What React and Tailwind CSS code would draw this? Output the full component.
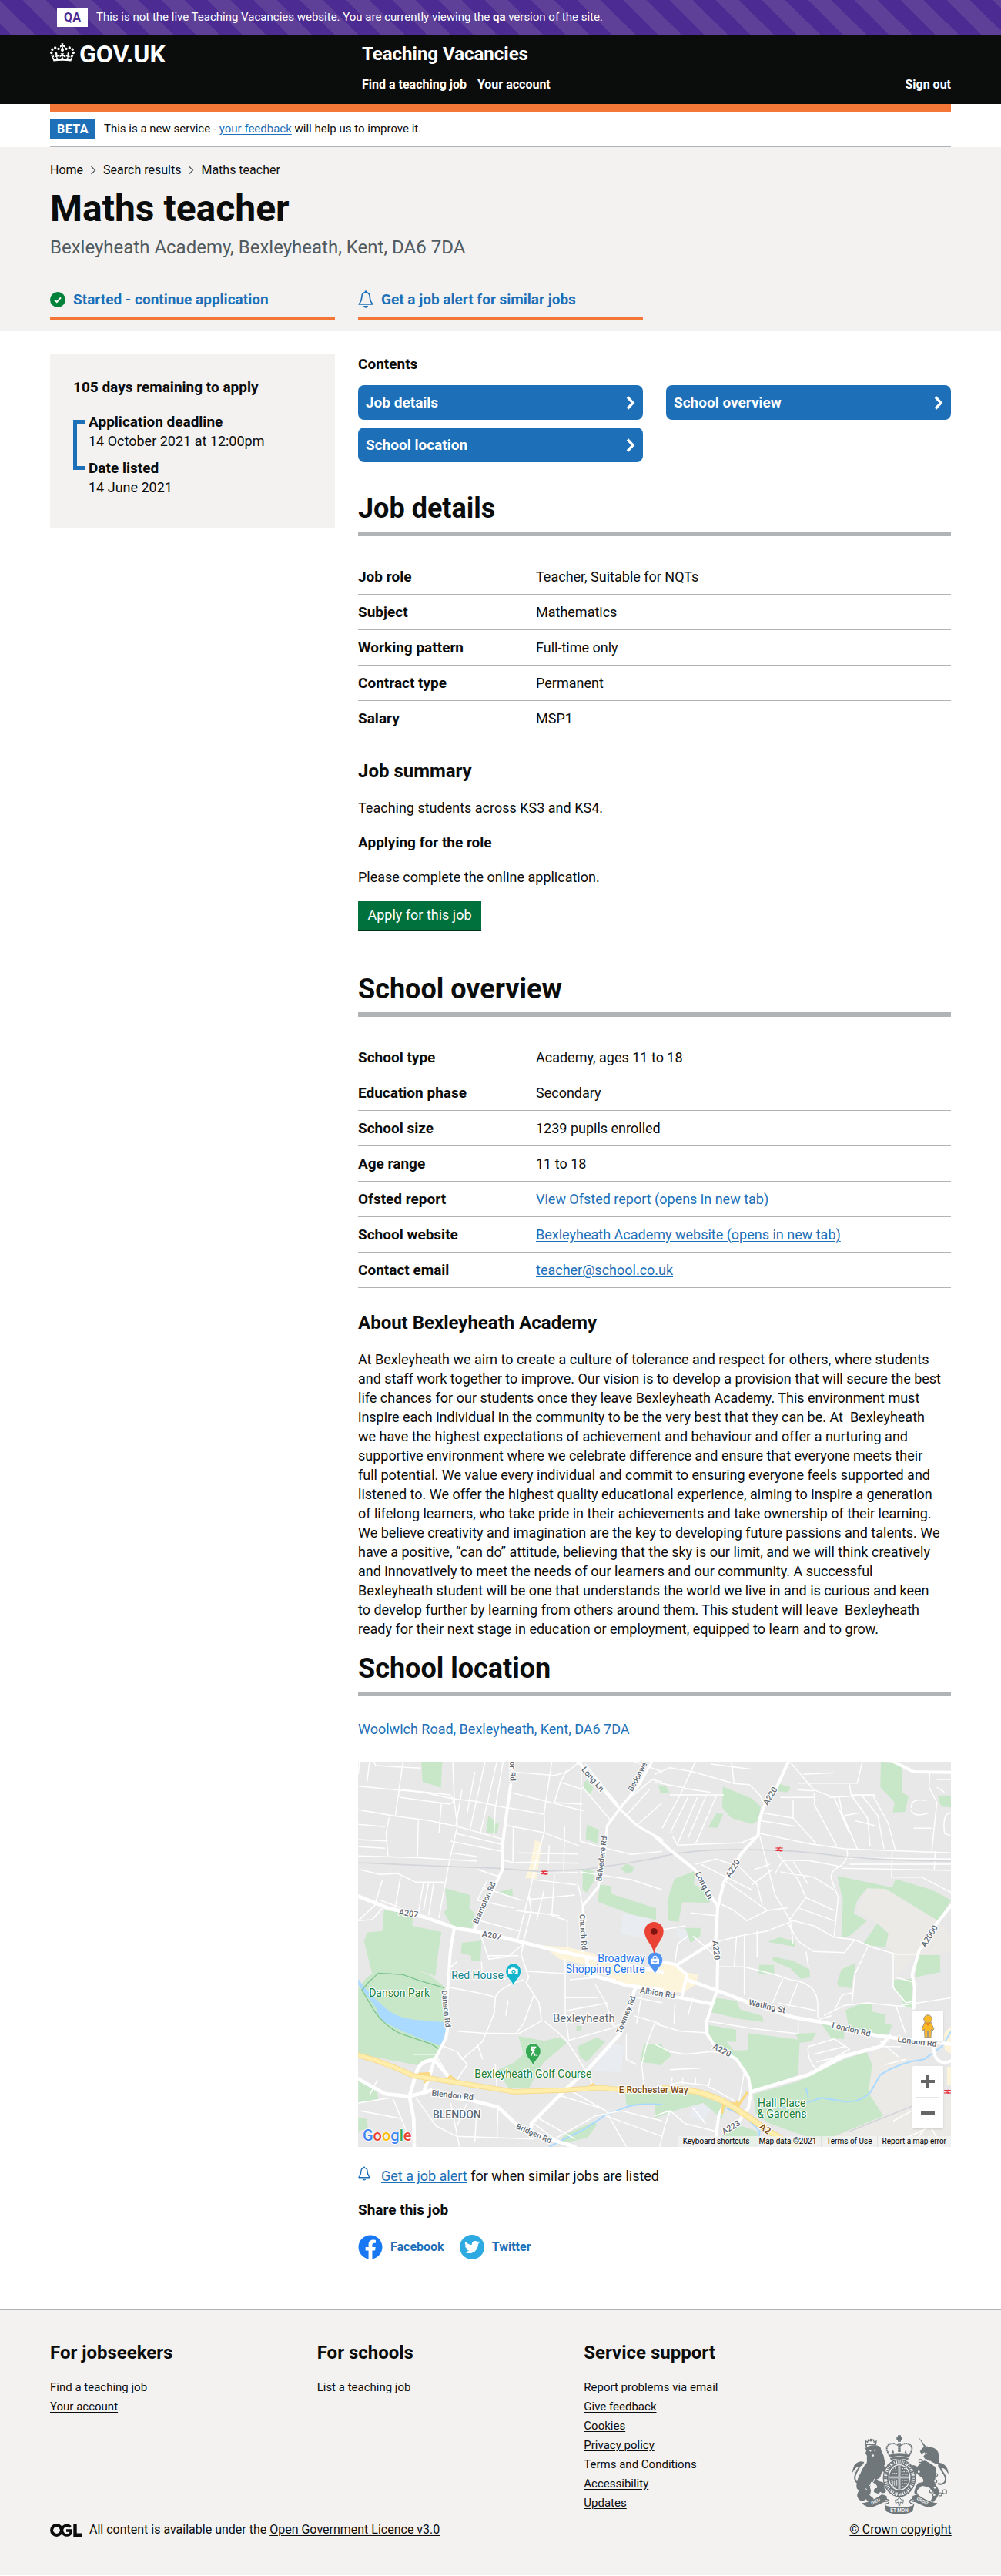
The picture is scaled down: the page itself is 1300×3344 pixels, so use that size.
import React from "react";
import { FaFacebook, FaTwitter } from "react-icons/fa";

const link = "text-[#1d70b8] underline underline-offset-2";
const footerLink = "text-[#0b0c0c] underline underline-offset-2";
const container = "mx-auto max-w-[1170px] w-[calc(100%-60px)]";

/* ---------- icons ---------- */

function CrownIcon({ className }) {
  return (
    <svg className={className} viewBox="0 0 132 97" fill="currentColor" aria-hidden="true">
      <path d="M25 30.2c3.5 1.5 7.7-.2 9.1-3.7 1.5-3.6-.2-7.8-3.9-9.2-3.6-1.4-7.6.3-9.1 3.9-1.4 3.5.3 7.5 3.9 9zM9 39.5c3.6 1.5 7.8-.2 9.2-3.7 1.5-3.6-.2-7.8-3.9-9.1-3.6-1.5-7.6.2-9.1 3.8-1.4 3.5.3 7.5 3.8 9zM4.4 57.2c3.5 1.5 7.7-.2 9.1-3.8 1.5-3.6-.2-7.7-3.9-9.1-3.5-1.5-7.6.3-9.1 3.8-1.4 3.5.3 7.6 3.9 9.1zm38.3-21.4c3.5 1.5 7.7-.2 9.1-3.8 1.5-3.6-.2-7.7-3.9-9.1-3.6-1.5-7.6.3-9.1 3.8-1.3 3.6.4 7.7 3.9 9.1zm64.4-5.6c-3.6 1.5-7.8-.2-9.1-3.7-1.5-3.6.2-7.8 3.8-9.2 3.6-1.4 7.7.3 9.2 3.9 1.3 3.5-.4 7.5-3.9 9zm15.9 9.3c-3.6 1.5-7.7-.2-9.1-3.7-1.5-3.6.2-7.8 3.7-9.1 3.6-1.5 7.7.2 9.2 3.8 1.5 3.5-.3 7.5-3.8 9zm4.7 17.7c-3.6 1.5-7.8-.2-9.2-3.8-1.5-3.6.2-7.7 3.9-9.1 3.6-1.5 7.7.3 9.2 3.8 1.3 3.5-.4 7.6-3.9 9.1zM89.3 35.8c-3.6 1.5-7.8-.2-9.2-3.8-1.4-3.6.2-7.7 3.9-9.1 3.6-1.5 7.7.3 9.2 3.8 1.4 3.6-.3 7.7-3.9 9.1zM69.7 17.7l8.9 4.7V9.3l-8.9 2.8c-.2-.3-.5-.6-.9-.9L72.4 0H59.6l3.5 11.2c-.3.3-.6.5-.9.9l-8.8-2.8v13.1l8.8-4.7c.3.3.6.7.9.9l-5 15.4v.1c-.2.8-.4 1.6-.4 2.4 0 4.1 3.1 7.5 7 8.1h.2c.3 0 .7.1 1 .1.4 0 .7 0 1-.1h.2c4-.6 7.1-4.1 7.1-8.1 0-.8-.1-1.7-.4-2.4V34l-5.1-15.4c.4-.2.7-.6 1-.9zM66 92.8c16.9 0 32.8 1.1 47.1 3.2 4-16.9 8.9-26.7 14-33.5l-9.6-3.4c1 4.9 1.1 7.2 0 10.2-1.5-1.4-3-4.3-4.2-8.7L108.6 76c2.8-2 5-3.2 7.5-3.3-4.4 9.4-10 11.9-13.6 11.2-4.3-.8-6.3-4.6-5.6-7.9 1-4.7 5.7-5.9 8-.5 4.3-8.7-3-11.4-7.6-8.8 7.1-7.2 7.9-13.5 2.1-21.1-8 6.1-8.1 12.3-4.5 20.8-4.7-5.4-12.1-2.5-9.5 6.2 3.4-5.2 7.9-2 7.2 3.1-.6 4.3-6.4 7.8-13.5 7.2-10.3-.9-10.9-8-11.2-13.8 2.5-.5 7.1 1.8 11 7.3L80.2 60c-4.1 4.4-8 5.3-12.3 5.4 1.4-4.4 8-11.6 8-11.6H55.5s6.4 7.2 7.9 11.6c-4.2-.1-8-1-12.3-5.4l1.4 16.4c3.9-5.5 8.5-7.7 10.9-7.3-.3 5.8-.9 12.8-11.1 13.8-7.2.6-12.9-2.9-13.5-7.2-.7-5 3.8-8.3 7.1-3.1 2.7-8.7-4.6-11.6-9.4-6.2 3.7-8.5 3.6-14.7-4.6-20.8-5.8 7.6-5 13.9 2.2 21.1-4.7-2.6-11.9.1-7.7 8.8 2.3-5.5 7.1-4.2 8.1.5.7 3.3-1.3 7.1-5.7 7.9-3.5.7-9-1.8-13.5-11.2 2.5.1 4.7 1.3 7.5 3.3l-4.7-15.4c-1.2 4.4-2.7 7.2-4.3 8.7-1.1-3-.9-5.3 0-10.2l-9.5 3.4c5 6.9 9.9 16.7 14 33.5 14.8-2.1 30.8-3.2 47.7-3.2z" />
    </svg>
  );
}

function BellIcon({ className }) {
  return (
    <svg className={className} viewBox="0 0 20 23" fill="none" aria-hidden="true">
      <path
        d="M10 2.6c-3.4 0-5.2 2.6-5.2 5.8 0 5.2-1.6 6.6-3.6 9.6h17.6c-2-3-3.6-4.4-3.6-9.6 0-3.2-1.8-5.8-5.2-5.8Z"
        stroke="#1d70b8"
        strokeWidth="1.7"
        strokeLinejoin="round"
      />
      <path d="M10 .3a1.4 1.4 0 0 1 1.4 1.4v1.2H8.6V1.7A1.4 1.4 0 0 1 10 .3ZM7 20h6c-.3 1.7-1.5 2.8-3 2.8S7.300 21.700 7 20Z" fill="#1d70b8" />
    </svg>
  );
}

function TickIcon() {
  return (
    <svg className="size-5 shrink-0" viewBox="0 0 20 20" aria-hidden="true">
      <circle cx="10" cy="10" r="10" fill="#00823b" />
      <path d="M5.800 10.300l3 2.700 5.200-5.700" fill="none" stroke="#fff" strokeWidth="2" />
    </svg>
  );
}

function OglIcon() {
  return (
    <svg className="w-[41px] h-[17px] shrink-0" viewBox="0 0 41 17" fill="none" stroke="#0b0c0c" aria-hidden="true">
      <circle cx="8.500" cy="8.500" r="6.400" strokeWidth="4" />
      <path d="M26.500 4.200A6.400 6.400 0 1 0 27 12.500V9H21" strokeWidth="3.600" />
      <path d="M32.500 0v14.800H41" strokeWidth="4.400" />
    </svg>
  );
}

function Crest() {
  const c = "#6f777b";
  const bg = "#f3f2f1";
  return (
    <svg className="w-[125px] h-[102px]" viewBox="51 35 375 306" fill={c} role="img" aria-label="Royal coat of arms">
      {/* lion */}
      <path d="M104 72l-2-14 8 5 4-10 9 6 9-6 4 10 8-4-2 14z" fill="none" stroke={c} strokeWidth="4" />
      <circle cx="123" cy="53" r="4" />
      <path d="M103 85c10-11 38-14 53-6 8 6 6 14 10 22 6 10 8 18 9 26l5 20-6 8 10 6c6 8 5 18 2 26l-16-10c-6 4-8 14-10 22-8 10-28 8-38 22l-2 20c6 10 2 20-2 28l12 10c8 6 2 14-6 12l-12 2-8-8-12 8c-14-2-24-14-22-28l6-14-8-8c-4-22 6-44 14-58 6-14 12-28 24-40 4-8 0-18 2-28l-6-12 4-10-6-8c4-4 10-6 8-14l-6-6z" />
      <path d="M130 184l22 30 16 4c8 4 8 12 8 24l6 12c-4 10-16 8-22 2l-8 8-16-6c-4-10 2-18 10-16 4-6 0-14-8-18l-16-10c-8-10-4-22 8-30z" />
      <path d="M88 222c-22 2-31-10-26-30 4-18 20-30 18-42-2-8-14-4-20 6" fill="none" stroke={c} strokeWidth="6" />
      <path d="M51 182c2-22 10-40 32-44l14 2c-6 16-16 18-24 18-10 4-14 14-22 24z" />
      <path d="M112 92l14 2-4 6zM134 94l8-4-2 10zM126 110l10 2-4 10z" fill={bg} />
      <path d="M138 205c-4 14-12 22-22 28M100 242l8 6" stroke={bg} strokeWidth="3" fill="none" />
      {/* unicorn */}
      <path d="M308 42l32 40-7 4z" />
      <path d="M334 86l8-8 6 5c18-2 34 6 38 22 6 18 4 34 0 44l-10-2-42-18-6-10c2-8 14-10 14-14l-22 4-6-10c6-8 10-16 20-18z" />
      <path d="M330 130l44 28 4 24c0 16-8 26-6 40l14 24c4 14 0 24-6 34l-14 16-10-6 14-22-4-14-18-16-26-6-14 14c-8 6-6 18 2 22l-14-2c-8-8 0-22 4-34l8-10 18-4c4-8 0-14-6-18l-22-18-10 10 6 14-8 2-14-20 6-18-14-4 8-10 18-4 14 6z" />
      <path d="M384 224c16 6 32-2 30-20-2-20-22-32-20-44 2-8 10-6 16 2" fill="none" stroke={c} strokeWidth="6" />
      <path d="M426 188c-2-24-12-42-38-46-8 16 0 24 14 22 12 2 16 12 24 24z" />
      <path d="M326 132c14-2 34 8 48 24" fill="none" stroke={bg} strokeWidth="8" strokeDasharray="6 3" />
      <path d="M322 108l10-6 2 4z" fill={bg} />
      <g fill={bg} stroke={c} strokeWidth="3.500">
        <circle cx="316" cy="136" r="6" /><circle cx="310" cy="178" r="6" /><circle cx="378" cy="190" r="5" />
        <circle cx="374" cy="215" r="6" /><circle cx="372" cy="240" r="6" /><circle cx="358" cy="254" r="6" />
        <circle cx="370" cy="268" r="6" /><circle cx="393" cy="266" r="6" /><circle cx="410" cy="256" r="8" />
      </g>
      {/* crown */}
      <path d="M228 36h12v7h5v10h-5v8h-12v-8h-5V43h5z" />
      <path d="M196 118c-3-12-12-20-11-32 2-20 30-24 49-8 19-16 47-12 49 8 1 12-8 20-11 32" fill="none" stroke={c} strokeWidth="6" strokeDasharray="6 1.500" />
      <path d="M234 66v36" stroke={c} strokeWidth="10" strokeDasharray="7 2" />
      <path d="M196 112q38-14 76 0l-2 10q-36-10-72 0z" />
      <path d="M205 107l4-16 5 14zM229 100l5-18 5 18zM254 105l5-14 4 16z" />
      <path d="M198 124q36-9 72 0l-2 8q-34-8-68 0z" fill={c} />
      {/* garter and shield */}
      <ellipse cx="234" cy="202" rx="64" ry="74" />
      <ellipse cx="234" cy="200" rx="43" ry="51" fill={bg} />
      <ellipse cx="234" cy="200" rx="39" ry="47" />
      <ellipse cx="234" cy="202" rx="54" ry="63" fill="none" stroke={bg} strokeWidth="12" strokeDasharray="3 4 5 3 2 6" />
      <path d="M234 154v92M196 200h76" stroke={bg} strokeWidth="8" />
      <path d="M234 154v92M196 200h76" stroke={c} strokeWidth="2.500" />
      <path d="M206 172h20M204 184h22M208 164h14M244 166h14M242 178h26M246 188h22M244 212h24M244 224h20M246 236h10" stroke={bg} strokeWidth="3" strokeDasharray="5 3" />
      <path d="M204 210h20v20l-8 10c-8-6-12-16-12-30zm5 4v14m6-14v18" fill={c} stroke={bg} strokeWidth="2.500" />
      <g fill={bg}><circle cx="212" cy="266" r="3" /><circle cx="222" cy="269" r="3" /><circle cx="236" cy="268" r="3" /><circle cx="250" cy="266" r="3" /></g>
      {/* motto ribbons */}
      <path d="M88 300c20 0 60-20 78-34l18 6 4 24c-18-6-40 20-74 20-12-4-20-8-26-16zM382 300c-20 0-60-20-78-34l-18 6-4 24c18-6 40 20 74 20 12-4 20-8 26-16z" />
      <path d="M172 290c14-10 28 0 18 10l-12 4 6 26c26 14 76 14 100 0l6-26-12-4c-10-10 4-20 18-10" fill={bg} stroke={c} strokeWidth="4" />
      <path d="M178 308c24 12 88 12 112 0l-6 24c-22 12-78 12-100 0z" />
      <path d="M234 276l6 10 10 2-2 12-10-4-2 14h-4l-2-14-10 4-2-12 10-2z" fill={bg} stroke={c} strokeWidth="3" />
      <g fill={bg} fontFamily="Roboto, sans-serif" fontWeight="700" fontSize="19" textAnchor="middle">
        <text x="234" y="336">ET MON</text>
        <text x="144" y="299" transform="rotate(-26 144 299)" fontSize="17">DIEU</text>
        <text x="322" y="297" transform="rotate(28 322 297)" fontSize="17">DROIT</text>
      </g>
    </svg>
  );
}

/* ---------- map ---------- */

/* Road and park geometry is held in two halves, each in its own local space. */
const WEST = "translate(-5 -7) scale(.333333)";
const EAST = "translate(385 -7) scale(.333333)";

const westParks = [
  "M262 20L343 20 338 122 305 110 266 100z",
  "M522 232L542 246 546 262 564 262 556 302 514 296z",
  "M896 100L912 90 932 126 918 148 898 134z",
  "M906 266L954 286 948 340 902 322z",
  "M890 440L934 446 932 490 906 530 890 520z",
  "M1040 438L1060 418 1090 430 1084 450 1060 456z",
  "M958 500L1000 505 1004 536 1176 592 1176 636 1090 618 948 566z",
  "M354 514L452 540 448 590 470 612 460 670 380 660 350 608 362 590z",
  "M566 526L616 516 618 542 594 542z",
  "M116 598L228 616 226 660 340 684 328 760 316 856 240 830 300 856 352 898 350 950 356 1060 340 1128 318 1166 250 1204 60 1166 16 1160 16 900 50 860 70 846 38 720 50 686 110 680z",
  "M420 726L496 718 492 796 456 796 456 776 416 766z",
  "M640 1090L740 1108 800 1094 828 1116 740 1190 722 1216 680 1294 600 1290 558 1222 620 1194 660 1160z",
  "M868 1130L946 1094 978 1112 906 1190 880 1170z",
  "M866 1050h20v20h-20z",
  "M1128 1122L1200 1120 1200 1200 1114 1190z",
  "M16 1262L86 1290 94 1334 16 1350z",
  "M16 1406L48 1412 54 1450 16 1460z",
  "M1056 1310L1200 1290 1200 1356 1060 1356z",
  "M820 1472L940 1420 944 1436 910 1484 796 1512z",
];
const eastParks = [
  "M14 112L44 116 60 142 24 142z",
  "M266 118L380 164 414 196 404 250 380 264 300 240 264 200z",
  "M240 222L268 224 246 278 210 276z",
  "M482 106L530 120 520 140 480 136z",
  "M882 20L966 30 966 140 990 156 976 216 928 218 936 180 880 120z",
  "M1104 152L1156 152 1156 198 1116 196z",
  "M158 446L154 500 216 520 214 570 108 568 94 644 52 640 50 560 78 476z",
  "M120 668L180 668 178 700 140 726z",
  "M712 466L926 510 940 478 1080 520 1156 560 1104 640 900 516 828 514 790 560 776 612 828 640 760 700 728 704 734 560z",
  "M868 650L912 690 900 744 812 732z",
  "M440 722L486 704 546 720 548 742z",
  "M462 780L540 796 604 830 606 860 570 866 530 826 460 796z",
  "M408 812L466 812 466 848 406 846z",
  "M712 880L728 830 784 804 766 904 716 894z",
  "M1020 774L1112 774 1114 840 1016 860z",
  "M930 870L1006 866 1004 980 966 974 968 940 936 910z",
  "M228 940L320 952 334 986 420 1010 424 1034 340 1024 220 996z",
  "M744 988L808 962 846 964 848 994 900 1006 898 1040 926 1046 912 1082 760 1074z",
  "M212 1046L318 1064 318 1112 280 1110 310 1146 362 1144 366 1078 566 1104 560 1240 384 1306 358 1220 300 1160 212 1110z",
  "M550 1080L630 1076 612 1110 564 1116zM652 1042L736 1044 740 1100 690 1100z",
  "M560 1266L740 1180 826 1152 848 1200 834 1310 892 1400 650 1500 590 1480 450 1430 396 1396 384 1316z",
  "M0 1124L40 1134 66 1164 24 1202 0 1200z",
  "M0 1294L120 1300 280 1360 262 1410 190 1350 90 1376 0 1410z",
  "M270 1460L340 1440 400 1460 400 1520 260 1520z",
];
const westCommercial = "M704 326L732 336 710 476 666 474 684 430zM732 736L836 744 940 770 960 800 1120 820 1200 850 1200 922 1100 900 1030 880 900 810 800 790z";
const eastCommercial = "M0 806L60 806 110 838 170 850 160 890 110 920 0 910zM1128 1080L1156 1050 1156 1160 1130 1140zM1140 1210h16v70h-16z";

const westMinor = [
  "M16 116L270 140 380 164 480 176 592 200M16 208L170 234 290 250 400 272 576 322M16 265L120 274M16 324L130 330M16 352L120 358M16 388L240 394 372 402 480 408",
  "M190 130L372 150Q400 176 372 186L180 160Q160 140 190 130zM190 20L160 234M136 238L124 300 132 388M250 250L246 394M384 20L390 176 402 272 372 402 350 520M20 20L16 70M60 20L50 100M76 20L84 36 260 46",
  "M510 20L450 290M556 20L490 306M580 20L550 200 544 310M420 130L396 270M470 60L440 220M376 330L572 370M396 300L572 342M376 376L480 390",
  "M612 60L780 74 830 60 880 20M608 140L754 176 892 212M600 200L742 226M590 268L736 296 800 320M620 276L618 410M770 20L740 220 742 290 710 400 690 500 650 660 636 716M800 100L890 128M830 50L804 100 780 180 890 186",
  "M580 404L620 414 700 412 870 416M640 376L870 380M700 456L870 452M760 346L756 420M820 270L816 450M880 330L886 20M800 320L880 350M700 480L866 500M650 560L860 540M630 600L800 620",
  "M20 440L100 460 170 456 240 490 350 490M110 480L80 580 16 640M180 470L160 590M270 490L250 610M310 490L290 620M350 520L330 630M290 490L270 600M100 560L180 590",
  "M340 180L330 300M16 640L70 636 110 590M480 440L570 470M480 560L620 590M500 510L650 560M490 640L640 680M520 480L480 560M690 570L680 540M680 550L690 600 660 720M740 520L710 640M780 460L770 620 830 640 830 760",
  "M490 686L524 790 600 780 660 730 650 770 680 860 670 880 720 960 730 1030 640 1080 500 1078 400 1070M640 776L520 776M664 836L820 846M372 836L500 852 590 866M400 800L370 826M372 900L480 920 545 936",
  "M660 870Q560 900 550 940L546 1000 500 1110 420 1180 400 1150M600 950L590 1010M700 930L660 1040 630 1080M822 790L822 1000 836 1106 1000 1060 1040 1040M740 1030L800 1080 830 1110M830 1110L900 1220 930 1280M840 870L960 860 1020 870M820 940L950 940M830 990L990 960",
  "M940 890L980 960 1010 1050M880 450L1080 480 1200 520M890 120L1000 250M880 330L950 350 1080 382 1200 370M1040 190L1160 90 1200 100M1100 270L1200 180M1060 230L1150 130M1090 20L1200 60M900 30L1030 190M870 490L890 580",
  "M500 870L496 800M500 1180L480 1120M1090 1010L1190 1040M1100 940L1200 960M1120 930L1100 1040M1170 1040L1140 1120 1120 1200 1130 1290M1060 1080L1060 1180 1100 1200",
  "M320 1166L370 1250M350 1130L400 1150 440 1200 400 1260M230 1160L320 1160M150 1330L220 1500M16 1350L140 1330M20 1380L180 1410M90 1260L60 1320M240 1330L320 1440 400 1480 700 1490M376 1350L410 1520M560 1370L556 1490M440 1350L400 1440",
  "M550 1200L556 1290M840 1300L980 1380 1060 1520M800 1320L960 1370M700 1430L780 1490 940 1400 1040 1380 1200 1420M980 1400L1200 1480M720 1410L860 1490M480 1340L470 1500",
];
const eastMinor = [
  "M0 70L60 44 150 60 310 106 370 110 410 150 430 190M160 20L100 150 30 280M220 30L380 50M0 100L150 130 220 140M60 150L270 150M130 160L60 300M166 160L90 340M200 156L130 320M240 156L160 340M70 310L90 346 340 336 400 310",
  "M530 24L620 130 700 160 760 300M310 106L300 20M410 250L550 272M420 220L540 240 630 340M540 170L540 240M556 130L620 134M580 70L700 64M560 104L790 104 810 20M490 160L620 160M622 144L624 190 710 350M760 110L766 150 850 150 910 260 940 370M680 160L860 150M720 160L730 220 790 360M766 150L830 240 840 350M806 150L870 230 894 360M780 250L860 270M740 230L800 220",
  "M410 300L600 340 740 360 1156 376M410 310L470 540 530 640M750 366Q760 400 720 430Q680 450 690 480L716 550 700 700M730 436L1156 444M760 420L1156 420M926 370L924 470 1040 470 1156 530M760 396L1156 400M1094 370L1090 440",
  "M970 40L1020 60M1072 60L1070 120 1100 180 1080 370M1000 200Q1000 160 1060 172M1000 210Q1010 240 1070 220M1156 220Q1120 220 1130 300L1156 310M1010 280L1080 280M1100 90L1156 90M1100 120L1130 140",
  "M470 456L500 404 600 406 730 430M476 376L560 480 590 550 560 590 524 640M490 450L620 470 700 520M590 550L700 600M560 590L700 640M540 410L600 500M380 500L460 440M390 440L450 420M270 480L440 600 360 640 310 600 260 576",
  "M160 420L240 400 330 430 400 500 420 580M180 420L380 520M250 720L330 700 440 680 540 640 620 660 700 704 780 714 850 744 940 770 1020 770M90 810L240 710M520 650L560 720 620 760 740 764 780 714M440 600L520 590",
  "M140 610L240 620M130 700L90 730 80 800M0 680L120 660M150 700L230 770M250 820L350 820 470 850 530 870Q630 880 636 960L636 1020M350 700L350 930M500 866L460 960M560 880L520 980M480 960L630 990M320 700L310 820M540 730L530 640M400 680L400 780",
  "M600 820L590 760M830 744L780 850 770 960M930 770L930 900 980 960 1020 950M660 1010L740 970 830 960 980 976M700 990L730 930 770 920M940 970L980 1084M960 970L1156 940M1010 880L940 860M640 1024L690 1010",
  "M200 1030L380 1060 560 1080 560 1030M0 1040L100 1070 200 1076M80 960L76 1040M150 940L130 1010M0 1120L60 1150 120 1160 220 1150 300 1160M60 1220L180 1214M0 1290L100 1270 200 1280 310 1340M350 1230L330 1340M60 1290L70 1250M110 1280L110 1250M160 1280L160 1250M210 1290L216 1256",
  "M600 1130L700 1100 760 1140 640 1210M600 1130Q590 1170 630 1220M620 1160L740 1130M630 1190L800 1150M850 1130L960 1130M880 1110L950 1170M900 1200L980 1180M0 1400L60 1380 120 1430 240 1460M60 1380L40 1440 20 1520M150 1370L200 1430",
  "M950 1500L1100 1430M930 1420L1040 1360M1000 1520L1060 1440M1080 1450L1120 1520",
];
const westMajor = [
  [14, "M16 545L130 590 280 628 400 670 480 682 620 715 760 750 900 780 1010 800 1200 840"],
  [12, "M390 670Q372 760 372 800L360 960Q370 1060 356 1100L314 1180 296 1230M610 110L590 250 576 360 578 440 540 520 466 680"],
  [10, "M870 20L930 80 1030 200 1100 268 1200 326M1160 20L1110 110 1030 210 986 270 970 420 950 510 892 580 888 760"],
  [14, "M906 790L916 850 990 870 1060 892 1200 910M1096 900L1076 960 1036 1080 910 1220 820 1300 690 1430 690 1446"],
  [14, "M16 1256L120 1314 215 1324 270 1310 300 1300M310 1316L460 1340 560 1366 640 1440 760 1490 860 1520M215 1324L232 1410 234 1520M215 1324L240 1240Q252 1180 314 1184L370 1250M270 1310L300 1224"],
];
const eastMajor = [
  [12, "M522 20L476 120 424 200 408 250 404 306 340 376 270 490 246 590 238 720 246 800 244 910 204 1030 204 1080 236 1130 320 1180 366 1250 376 1306 366 1370 330 1420"],
  [12, "M0 310L60 364 156 440 190 500 244 580M90 810L236 720M30 800L80 810 126 850 108 930M0 930L100 940 220 964"],
  [14, "M126 870L240 910 360 956 540 1016 680 1040 750 1060 860 1086 960 1100 1156 1120M376 1306L600 1240 740 1166 880 1130 916 1090"],
  [12, "M1156 580L1100 650 1030 760 1004 850 1014 900 1010 980M930 20L1010 60 1156 62M1086 1130Q1090 1210 1156 1186M240 1480L250 1400 264 1370"],
];

function RoadLabel({ x, y, r = 0, size = 30, fill = "#5f6a75", weight = 500, anchor = "middle", children }) {
  return (
    <text x={x} y={y} transform={`rotate(${r} ${x} ${y})`} fontSize={size} fill={fill} fontWeight={weight} textAnchor={anchor} stroke="#fff" strokeWidth="7" strokeLinejoin="round" paintOrder="stroke">
      {children}
    </text>
  );
}

function Pin({ x, y, fill, children }) {
  return (
    <g transform={`translate(${x} ${y})`}>
      <path d="M0 58C-4 36-30 24-30 0a30 30 0 0 1 60 0C30 24 4 36 0 58z" fill={fill} stroke="#fff" strokeWidth="2" />
      {children}
    </g>
  );
}

function RailSign({ x, y }) {
  return <path d={`M${x - 14} ${y - 5}h28M${x - 14} ${y + 5}h28M${x - 7} ${y - 8}l14 16M${x + 5} ${y - 8}l-12 8 12 8`} stroke="#e8212e" strokeWidth="3" fill="none" />;
}

function MapDrawing() {
  return (
    <svg className="block w-full h-auto" viewBox="0 0 770 500" fontFamily="Roboto, sans-serif" role="img" aria-label="Map of Bexleyheath">
      <rect width="770" height="500" fill="#e8e8e8" />
      <g transform={EAST}>
        <path d="M828 514L900 516 1104 640 1156 700 1156 760 1020 774 940 860 930 760 880 720 868 650 790 600z" fill="#eceae7" />
        <path d="M850 1130L1000 1180 1080 1260 1156 1330 1156 1500 700 1520 650 1500 892 1400 834 1310z" fill="#eceae7" />
        <path d="M84 670L136 676 136 716 90 710zM150 1340L230 1360 190 1424 136 1400z" fill="#e8ebf0" />
      </g>
      <g transform={WEST}>
        <path d="M1046 612L1150 630 1140 710 1042 690zM990 1110L1050 1130 1040 1230 930 1226z" fill="#e9ecf0" />
        <path d={westParks.join("")} fill="#c8e7c8" />
        <path d={westCommercial} fill="#fdf4dc" />
        <path d="M16 868Q60 930 110 970 160 1020 240 1026L356 1036 356 1070 340 1128Q220 1090 120 1036 90 1010 86 980L16 890z" fill="#aadaff" />
        <path d="M352 902L250 872 190 850 94 844 56 880 30 910 60 960Q100 1040 180 1080L300 1120 340 1146" fill="none" stroke="#7cc38d" strokeWidth="4" />
      </g>
      <g transform={EAST}>
        <path d={eastParks.join("")} fill="#c8e7c8" />
        <path d={eastCommercial} fill="#fdf4dc" />
        <path d="M1156 1070L1120 1130 1050 1180Q960 1190 880 1240L840 1310Q800 1350 740 1344L650 1330 560 1360 480 1370M280 1370L350 1400 410 1460 400 1520M590 1290L600 1330" fill="none" stroke="#aadaff" strokeWidth="6" />
      </g>
      <g transform={WEST}>
        <path d="M1200 1356Q1100 1350 1060 1366L980 1396 900 1450 800 1500 760 1520" fill="none" stroke="#aadaff" strokeWidth="6" />
      </g>
      <g fill="none" stroke="#fff" strokeWidth="4.500" strokeLinejoin="round">
        <path transform={WEST} d={westMinor.join("")} />
        <path transform={EAST} d={eastMinor.join("")} />
      </g>
      <g fill="none" stroke="#d2d5d9" strokeWidth="5">
        <path transform={WEST} d="M16 414L300 426 560 436 720 448 900 440 1040 420 1200 392" />
        <path transform={EAST} d="M0 396Q160 356 400 364 560 366 700 386 840 404 1156 408M760 1460L1010 1360" />
      </g>
      <g fill="none" stroke="#fff" strokeLinejoin="round" strokeLinecap="round">
        <g transform={WEST}>{westMajor.map(([w, d]) => <path key={d} d={d} strokeWidth={w} />)}</g>
        <g transform={EAST}>{eastMajor.map(([w, d]) => <path key={d} d={d} strokeWidth={w} />)}</g>
      </g>
      <g fill="none" strokeLinejoin="round">
        <g transform={WEST}>
          <path d="M250 1236L290 1234 296 1250 270 1272M360 1262L374 1244 400 1266M910 1290L930 1276 946 1292" stroke="#fbd982" strokeWidth="8" />
          <path d="M10 1162Q120 1190 230 1244L400 1270 620 1306 820 1300 960 1290 1060 1300 1200 1300" stroke="#f6d98a" strokeWidth="20" />
          <path d="M10 1162Q120 1190 230 1244L400 1270 620 1306 820 1300 960 1290 1060 1300 1200 1300" stroke="#ffeeab" strokeWidth="15" />
        </g>
        <g transform={EAST}>
          <path d="M262 1392L270 1350 330 1354 362 1308M320 1340L334 1390" stroke="#fbd982" strokeWidth="10" />
          <path d="M30 1294Q160 1290 270 1344 350 1390 430 1450L560 1530" stroke="#f6d98a" strokeWidth="24" />
          <path d="M30 1294Q160 1290 270 1344 350 1390 430 1450L560 1530" stroke="#ffeeab" strokeWidth="18" />
        </g>
      </g>
      <g transform={WEST}>
        <RailSign x={741} y={453} />
        <RoadLabel x={210} y={622} r={9} size={32}>A207</RoadLabel>
        <RoadLabel x={534} y={708} r={10} size={32}>A207</RoadLabel>
        <RoadLabel x={607} y={58} r={88}>on Rd</RoadLabel>
        <RoadLabel x={516} y={574} r={-66}>Brampton Rd</RoadLabel>
        <RoadLabel x={922} y={96} r={49} size={32}>Long Ln</RoadLabel>
        <RoadLabel x={1113} y={84} r={-62}>Bedonwe</RoadLabel>
        <RoadLabel x={974} y={400} r={-83}>Belvedere Rd</RoadLabel>
        <RoadLabel x={882} y={685} r={86}>Church Rd</RoadLabel>
        <RoadLabel x={348} y={984} r={84}>Danson Rd</RoadLabel>
        <RoadLabel x={1068} y={1010} r={-68}>Townley Rd</RoadLabel>
        <RoadLabel x={382} y={1330} r={6} size={32}>Blendon Rd</RoadLabel>
        <RoadLabel x={696} y={1478} r={24}>Bridgen Rd</RoadLabel>
        <RoadLabel x={1180} y={932} r={9} size={32}>Albion Rd</RoadLabel>
        <RoadLabel x={1166} y={1312} r={0} size={36} fill="#7a4a10">E Rochester Way</RoadLabel>
        <RoadLabel x={895} y={1034} size={45} weight={400}>Bexleyheath</RoadLabel>
        <RoadLabel x={400} y={1410} size={42}>BLENDON</RoadLabel>
        <RoadLabel x={176} y={936} size={42} weight={400} fill="#188038">Danson Park</RoadLabel>
        <RoadLabel x={697} y={1250} size={42} weight={400} fill="#188038">Bexleyheath Golf Course</RoadLabel>
        <RoadLabel x={480} y={866} size={42} weight={400} fill="#12858d">Red House</RoadLabel>
        <RoadLabel x={1133} y={801} size={42} weight={400} anchor="end" fill="#1a73e8">Broadway</RoadLabel>
        <RoadLabel x={1133} y={843} size={42} weight={400} anchor="end" fill="#1a73e8">Shopping Centre</RoadLabel>
        <Pin x={620} y={837} fill="#12b5cb">
          <path d="M-20-10h10v-4h16l3 4h9v22h-38z" fill="#fff" />
          <circle cx="1" cy="1" r="6" fill="none" stroke="#12b5cb" strokeWidth="4" />
        </Pin>
        <Pin x={697} y={1148} fill="#34a853">
          <path d="M-10-16L12-16" stroke="#fff" strokeWidth="4" />
          <circle cx="-5" cy="-9" r="4" fill="#fff" />
          <path d="M-8-3L4-3 2 4 8 18M0 2l-8 16M-4-4L8-12" fill="none" stroke="#fff" strokeWidth="5" />
          <circle cx="15" cy="17" r="3" fill="#fff" />
        </Pin>
        <Pin x={1172} y={792} fill="#4f93f5">
          <path d="M-16-4h32v22h-32z" fill="#fff" />
          <path d="M-7-4v-3a7 7 0 0 1 14 0v3" fill="none" stroke="#fff" strokeWidth="4" />
          <path d="M-8 5q8 9 16 0" fill="none" stroke="#4f93f5" strokeWidth="4" />
        </Pin>
        <path d="M1168 770C1164 732 1131 716 1131 682a37 37 0 0 1 74 0C1205 716 1172 732 1168 770z" fill="#ea4335" />
        <circle cx="1168" cy="682" r="13" fill="#7f1410" />
        <g fontSize="60" fontWeight="500" stroke="#fff" strokeWidth="5" paintOrder="stroke">
          <text x="33" y="1498">
            <tspan fill="#4285f4">G</tspan><tspan fill="#ea4335">o</tspan><tspan fill="#fbbc04">o</tspan><tspan fill="#4285f4">g</tspan><tspan fill="#34a853">l</tspan><tspan fill="#ea4335">e</tspan>
          </text>
        </g>
      </g>
      <g transform={EAST}>
        <RailSign x={486} y={362} />
        <RailSign x={1142} y={1306} />
        <RoadLabel x={460} y={160} r={-58} size={32}>A220</RoadLabel>
        <RoadLabel x={314} y={442} r={-58} size={32}>A220</RoadLabel>
        <RoadLabel x={230} y={756} r={84} size={32}>A220</RoadLabel>
        <RoadLabel x={258} y={1154} r={27} size={32}>A220</RoadLabel>
        <RoadLabel x={304} y={1454} r={-32} size={32}>A223</RoadLabel>
        <RoadLabel x={424} y={1460} r={36} size={36} fill="#7a4a10">A2</RoadLabel>
        <RoadLabel x={1080} y={706} r={-58} size={32}>A2000</RoadLabel>
        <RoadLabel x={184} y={508} r={63} size={32}>Long Ln</RoadLabel>
        <RoadLabel x={436} y={984} r={13} size={32}>Watling St</RoadLabel>
        <RoadLabel x={764} y={1074} r={13} size={32}>London Rd</RoadLabel>
        <RoadLabel x={1022} y={1122} r={7} size={32}>London Rd</RoadLabel>
        <RoadLabel x={496} y={1365} size={42} weight={400} fill="#188038">Hall Place</RoadLabel>
        <RoadLabel x={496} y={1407} size={42} weight={400} fill="#188038">&amp; Gardens</RoadLabel>
      </g>
    </svg>
  );
}

function SchoolMap() {
  return (
    <div className="relative overflow-hidden">
      <MapDrawing />
      <div className="absolute right-[10px] bottom-6 flex flex-col gap-8">
        <button type="button" aria-label="Street View" className="size-10 bg-white rounded-xs shadow flex items-center justify-center">
          <svg className="w-[18px] h-[31px]" viewBox="0 0 18 31" aria-hidden="true" stroke="#8a8a8a" strokeWidth=".8">
            <path d="M5 10h8l4 9-2 2-1.500-2-.5 11H9.500V22h-1v8H5l-.5-11L3 21l-2-2z" fill="#fbb829" />
            <circle cx="9" cy="6" r="5.300" fill="#fbb829" />
            <path d="M5.500 11h7L9 15z" fill="#e58a1e" stroke="none" />
          </svg>
        </button>
        <div className="w-10 bg-white rounded-xs shadow flex flex-col items-center">
          <button type="button" aria-label="Zoom in" className="h-10 w-full flex items-center justify-center">
            <svg className="size-[18px]" viewBox="0 0 18 18" aria-hidden="true"><path d="M9 0v18M0 9h18" stroke="#666" strokeWidth="4" /></svg>
          </button>
          <span className="h-px w-[30px] bg-[#e6e6e6]" />
          <button type="button" aria-label="Zoom out" className="h-10 w-full flex items-center justify-center">
            <svg className="size-[18px]" viewBox="0 0 18 18" aria-hidden="true"><path d="M0 9h18" stroke="#666" strokeWidth="4" /></svg>
          </button>
        </div>
      </div>
      <div className="absolute right-0 bottom-0 flex text-[10px] leading-[14px] text-black bg-[#f5f5f5]/70">
        <button type="button" className="px-[6px]">Keyboard shortcuts</button>
        <span className="px-[6px]">Map data ©2021</span>
        <a href="#terms" className="px-[6px] border-l border-[#e0e0e0]">Terms of Use</a>
        <a href="#report" className="px-[6px] border-l border-[#e0e0e0]">Report a map error</a>
      </div>
    </div>
  );
}

/* ---------- page parts ---------- */

function EnvironmentBanner() {
  return (
    <div className="bg-[#4c2c92] bg-[linear-gradient(45deg,#5f4099_25%,#4c2c92_25%,#4c2c92_50%,#5f4099_50%,#5f4099_75%,#4c2c92_75%)] bg-[length:60px_60px] bg-[position:30px_0] text-white">
      <div className={container}>
        <p className="flex items-center py-[10px] pl-[9px] text-[15px] leading-[25px]">
          <strong className="bg-white text-[#4c2c92] w-10 text-center text-base leading-[25px] mr-[11px]">QA</strong>
          <span>This is not the live Teaching Vacancies website. You are currently viewing the <b>qa</b> version of the site.</span>
        </p>
      </div>
    </div>
  );
}

function Header() {
  return (
    <header className="bg-[#0b0c0c] text-white">
      <div className={`${container} flex pt-[10px] pb-[15px]`}>
        <a href="#govuk" className="w-[405px] shrink-0 flex items-start gap-[6px]">
          <CrownIcon className="w-8 h-[26px]" />
          <span className="text-[32px] leading-[30px] font-bold">GOV.UK</span>
        </a>
        <div className="flex-1">
          <a href="#service" className="block text-2xl leading-[30px] font-bold">Teaching Vacancies</a>
          <nav className="flex gap-[14px] mt-[15px] text-base leading-5 font-bold">
            <a href="#find">Find a teaching job</a>
            <a href="#account">Your account</a>
            <a href="#signout" className="ml-auto">Sign out</a>
          </nav>
        </div>
      </div>
    </header>
  );
}

function PhaseBanner() {
  return (
    <div className={container}>
      <div className="h-[10px] bg-[#f47738]" />
      <p className="flex items-center py-[10px] border-b border-[#b1b4b6] text-[15px] leading-[25px]">
        <strong className="bg-[#1d70b8] text-white w-[59px] text-center text-base leading-[25px] tracking-wide mr-[11px]">BETA</strong>
        <span>
          This is a new service - <a href="#feedback" className={link}>your feedback</a> will help us to improve it.
        </span>
      </p>
    </div>
  );
}

function CrumbArrow() {
  return (
    <svg className="w-2 h-3 mx-[9px]" viewBox="0 0 8 12" aria-hidden="true">
      <path d="M1.500 1l5 5-5 5" fill="none" stroke="#505a5f" strokeWidth="1.200" />
    </svg>
  );
}

function JobHeader() {
  return (
    <div className="bg-[#f3f2f1] pt-5 pb-[15px]">
      <div className={container}>
        <nav className="flex items-center text-base leading-5" aria-label="Breadcrumb">
          <a href="#home" className={footerLink}>Home</a>
          <CrumbArrow />
          <a href="#results" className={footerLink}>Search results</a>
          <CrumbArrow />
          <span>Maths teacher</span>
        </nav>
        <h1 className="mt-[15px] text-5xl leading-[50px] font-bold">Maths teacher</h1>
        <p className="mt-[10px] text-2xl leading-[30px] text-[#505a5f]">Bexleyheath Academy, Bexleyheath, Kent, DA6 7DA</p>
        <div className="mt-10 grid grid-cols-[370px_370px] gap-[30px] text-[19px] leading-[25px] font-bold text-[#1d70b8]">
          <a href="#continue" className="flex items-center gap-[10px] border-b-3 border-[#f47738] pb-[11px]">
            <TickIcon />
            Started - continue application
          </a>
          <a href="#alert" className="flex items-center gap-[10px] border-b-3 border-[#f47738] pb-[11px]">
            <BellIcon className="w-5 h-[23px] shrink-0" />
            Get a job alert for similar jobs
          </a>
        </div>
      </div>
    </div>
  );
}

function Timeline() {
  return (
    <aside className="w-[370px] shrink-0 self-start bg-[#f3f2f1] px-[30px] pt-[30px] pb-10 leading-[25px]">
      <h2 className="text-[19px] font-bold">105 days remaining to apply</h2>
      <div className="mt-5 flex text-lg leading-[25px]">
        <div className="w-[15px] h-[65px] mt-[10px] mr-[5px] border-l-5 border-y-5 border-[#1d70b8]" />
        <dl>
          <dt className="text-[19px] font-bold">Application deadline</dt>
          <dd>14 October 2021 at 12:00pm</dd>
          <dt className="mt-[10px] text-[19px] font-bold">Date listed</dt>
          <dd>14 June 2021</dd>
        </dl>
      </div>
    </aside>
  );
}

function ContentsLink({ href, children }) {
  return (
    <a href={href} className="flex items-center justify-between rounded-lg bg-[#1d70b8] px-[10px] py-[10px] text-white text-[19px] leading-[25px] font-bold">
      {children}
      <svg className="w-3 h-[18px]" viewBox="0 0 12 18" aria-hidden="true">
        <path d="M2 1.500L9 9l-7 7.500" fill="none" stroke="#fff" strokeWidth="3.400" />
      </svg>
    </a>
  );
}

function SectionHeading({ id, className = "", children }) {
  return (
    <h2 id={id} className={`${className} mb-[30px] border-b-6 border-[#b1b4b6] pb-[10px] text-4xl leading-10 font-bold`}>
      {children}
    </h2>
  );
}

function SummaryList({ rows }) {
  return (
    <dl className="mb-[30px]">
      {rows.map(([term, value, href]) => (
        <div key={term} className="flex py-[10px] border-b border-[#b1b4b6] leading-[25px]">
          <dt className="w-[30%] text-[19px] font-bold">{term}</dt>
          <dd className="flex-1 text-lg leading-[25px]">{href ? <a href={href} className={link}>{value}</a> : value}</dd>
        </div>
      ))}
    </dl>
  );
}

const jobRows = [
  ["Job role", "Teacher, Suitable for NQTs"],
  ["Subject", "Mathematics"],
  ["Working pattern", "Full-time only"],
  ["Contract type", "Permanent"],
  ["Salary", "MSP1"],
];

const schoolRows = [
  ["School type", "Academy, ages 11 to 18"],
  ["Education phase", "Secondary"],
  ["School size", "1239 pupils enrolled"],
  ["Age range", "11 to 18"],
  ["Ofsted report", "View Ofsted report (opens in new tab)", "#ofsted"],
  ["School website", "Bexleyheath Academy website (opens in new tab)", "#website"],
  ["Contact email", "teacher@school.co.uk", "mailto:teacher@school.co.uk"],
];

const about = `At Bexleyheath we aim to create a culture of tolerance and respect for others, where students
and staff work together to improve. Our vision is to develop a provision that will secure the best
life chances for our students once they leave Bexleyheath Academy. This environment must
inspire each individual in the community to be the very best that they can be. At\u00a0 Bexleyheath
we have the highest expectations of achievement and behaviour and offer a nurturing and
supportive environment where we celebrate difference and ensure that everyone meets their
full potential. We value every individual and commit to ensuring everyone feels supported and
listened to. We offer the highest quality educational experience, aiming to inspire a generation
of lifelong learners, who take pride in their achievements and take ownership of their learning.
We believe creativity and imagination are the key to developing future passions and talents. We
have a positive, “can do” attitude, believing that the sky is our limit, and we will think creatively
and innovatively to meet the needs of our learners and our community. A successful
Bexleyheath student will be one that understands the world we live in and is curious and keen
to develop further by learning from others around them. This student will leave\u00a0 Bexleyheath
ready for their next stage in education or employment, equipped to learn and to grow.`;

const footerGroups = [
  ["For jobseekers", ["Find a teaching job", "Your account"]],
  ["For schools", ["List a teaching job"]],
  ["Service support", ["Report problems via email", "Give feedback", "Cookies", "Privacy policy", "Terms and Conditions", "Accessibility", "Updates"]],
];

function Footer() {
  return (
    <footer className="border-t border-[#b1b4b6] bg-[#f3f2f1] pt-10 pb-[49px]">
      <div className={`${container} flex items-end gap-[29px]`}>
        <div className="flex-1">
          <div className="grid grid-cols-3 gap-[30px]">
            {footerGroups.map(([title, links]) => (
              <div key={title}>
                <h2 className="mb-[18px] text-2xl leading-[30px] font-bold">{title}</h2>
                <ul className="text-[15px] leading-[25px]">
                  {links.map((text) => (
                    <li key={text}><a href="#footer" className={footerLink}>{text}</a></li>
                  ))}
                </ul>
              </div>
            ))}
          </div>
          <div className="mt-3 flex items-center gap-[10px] text-base leading-5">
            <OglIcon />
            <span>
              All content is available under the <a href="#ogl" className={footerLink}>Open Government Licence v3.0</a>
            </span>
          </div>
        </div>
        <a href="#crown" className={`${footerLink} flex flex-col items-center gap-[11px] w-[131px] text-base leading-5 whitespace-nowrap`}>
          <Crest />
          © Crown copyright
        </a>
      </div>
    </footer>
  );
}

export default function App() {
  return (
    <div className="bg-white text-[#0b0c0c] font-[Roboto,sans-serif]">
      <EnvironmentBanner />
      <Header />
      <PhaseBanner />
      <JobHeader />
      <main className={`${container} flex gap-[30px] pt-[30px] pb-[65px]`}>
        <Timeline />
        <div className="flex-1 min-w-0 text-lg leading-[25px]">
          <nav aria-labelledby="contents">
            <h2 id="contents" className="mb-[15px] text-[19px] leading-[25px] font-bold">Contents</h2>
            <div className="grid grid-cols-2 gap-x-[30px] gap-y-[10px]">
              <ContentsLink href="#job-details">Job details</ContentsLink>
              <ContentsLink href="#school-overview">School overview</ContentsLink>
              <ContentsLink href="#school-location">School location</ContentsLink>
            </div>
          </nav>

          <SectionHeading id="job-details" className="mt-10">Job details</SectionHeading>
          <SummaryList rows={jobRows} />
          <h3 className="mb-5 text-2xl leading-[30px] font-bold">Job summary</h3>
          <p className="mb-5">Teaching students across KS3 and KS4.</p>
          <h4 className="mb-5 text-[19px] leading-[25px] font-bold">Applying for the role</h4>
          <p className="mb-[18px]">Please complete the online application.</p>
          <button type="button" className="block w-40 h-10 border-b-2 border-[#002d18] bg-[#00703c] text-white text-lg leading-5">
            Apply for this job
          </button>

          <SectionHeading id="school-overview" className="mt-[55px]">School overview</SectionHeading>
          <SummaryList rows={schoolRows} />
          <h3 className="mb-5 text-2xl leading-[30px] font-bold">About Bexleyheath Academy</h3>
          <p className="whitespace-pre-line">{about}</p>

          <SectionHeading id="school-location" className="mt-[19px]">School location</SectionHeading>
          <p className="mb-[30px]"><a href="#address" className={link}>Woolwich Road, Bexleyheath, Kent, DA6 7DA</a></p>
          <SchoolMap />

          <p className="mt-[25px] flex items-start">
            <BellIcon className="w-4 h-[19px] mr-[14px]" />
            <span><a href="#alert" className={link}>Get a job alert</a> for when similar jobs are listed</span>
          </p>
          <h3 className="mt-[19px] mb-5 text-[19px] leading-[25px] font-bold">Share this job</h3>
          <div className="flex gap-5 text-base font-bold text-[#1d70b8]">
            <a href="#facebook" className="flex items-center gap-[10px]">
              <FaFacebook className="size-8 text-[#1877f2]" />
              Facebook
            </a>
            <a href="#twitter" className="flex items-center gap-[10px]">
              <span className="size-8 rounded-full bg-[#2daae1] flex items-center justify-center">
                <FaTwitter className="size-5 text-white" />
              </span>
              Twitter
            </a>
          </div>
        </div>
      </main>
      <Footer />
    </div>
  );
}
